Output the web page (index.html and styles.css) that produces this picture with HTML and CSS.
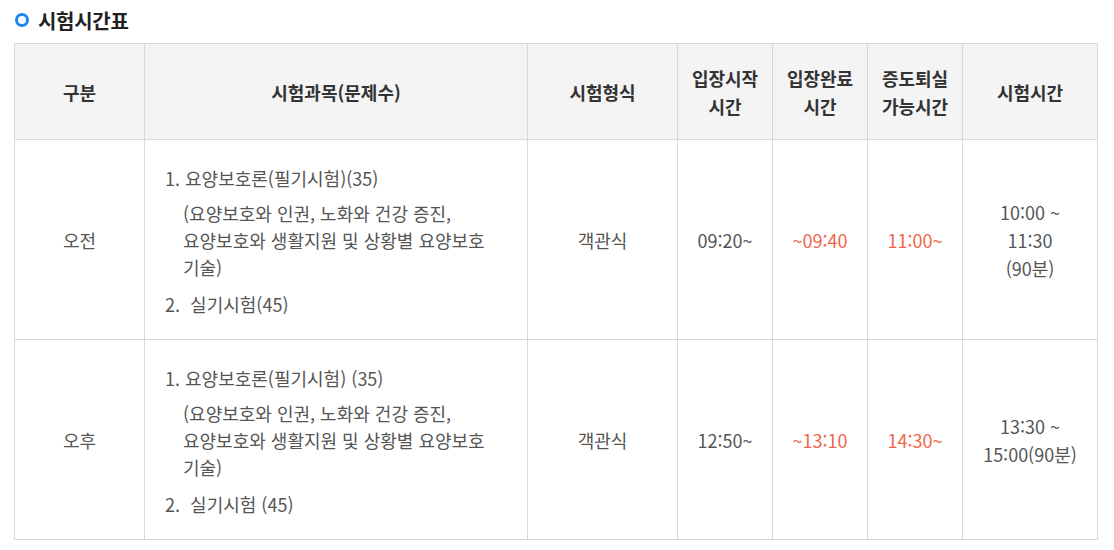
FILE: index.html
```html
<!DOCTYPE html>
<html lang="ko">
<head>
<meta charset="utf-8">
<link rel="stylesheet" href="styles.css">
</head>
<body>
<div class="page">
  <h2 class="title"><span class="ring"></span>시험시간표</h2>
  <table class="schedule">
    <colgroup>
      <col class="c1"><col class="c2"><col class="c3"><col class="c4"><col class="c5"><col class="c6"><col class="c7">
    </colgroup>
    <thead>
      <tr>
        <th>구분</th>
        <th>시험과목(문제수)</th>
        <th>시험형식</th>
        <th>입장시작<br>시간</th>
        <th>입장완료<br>시간</th>
        <th>증도퇴실<br>가능시간</th>
        <th>시험시간</th>
      </tr>
    </thead>
    <tbody>
      <tr>
        <td>오전</td>
        <td class="subjects">
          <p class="item">1. 요양보호론(필기시험)(35)</p>
          <p class="detail">(요양보호와 인권, 노화와 건강 증진, 요양보호와 생활지원 및 상황별 요양보호 기술)</p>
          <p class="item second">2.&nbsp; 실기시험(45)</p>
        </td>
        <td>객관식</td>
        <td>09:20~</td>
        <td class="accent">~09:40</td>
        <td class="accent">11:00~</td>
        <td>10:00 ~<br>11:30<br>(90분)</td>
      </tr>
      <tr>
        <td>오후</td>
        <td class="subjects">
          <p class="item">1. 요양보호론(필기시험) (35)</p>
          <p class="detail">(요양보호와 인권, 노화와 건강 증진, 요양보호와 생활지원 및 상황별 요양보호 기술)</p>
          <p class="item second">2.&nbsp; 실기시험 (45)</p>
        </td>
        <td>객관식</td>
        <td>12:50~</td>
        <td class="accent">~13:10</td>
        <td class="accent">14:30~</td>
        <td>13:30 ~<br>15:00(90분)</td>
      </tr>
    </tbody>
  </table>
</div>
</body>
</html>
```

FILE: styles.css
```css
html, body {
  margin: 0;
  padding: 0;
  background: #fff;
}

body {
  font-family: "Noto Sans CJK KR", "Noto Sans", sans-serif;
  color: #555;
}

.page {
  padding: 8px 17px 0 14px;
}

.title {
  display: flex;
  align-items: center;
  gap: 9px;
  margin: 0 0 11px 0;
  height: 24px;
  font-size: 20px;
  font-weight: 700;
  color: #222;
  letter-spacing: -0.3px;
}

.ring {
  display: block;
  width: 8px;
  height: 8px;
  border: 3.5px solid #1a86ee;
  border-radius: 50%;
  margin-left: 1px;
}

.schedule {
  width: 1083px;
  border-collapse: collapse;
  table-layout: fixed;
  font-size: 18px;
  word-break: keep-all;
}

.c1 { width: 130px; }
.c2 { width: 383px; }
.c3 { width: 150px; }
.c4 { width: 95px; }
.c5 { width: 95px; }
.c6 { width: 95px; }
.c7 { width: 135px; }

.schedule th,
.schedule td {
  border: 1px solid #d8d8d8;
  text-align: center;
  vertical-align: middle;
}

.schedule th {
  background: #f4f4f4;
  color: #333;
  font-weight: 700;
  font-size: 18px;
  line-height: 28px;
  height: 95px;
  padding: 0;
}

.schedule td {
  height: 195px;
  padding: 0;
  line-height: 28px;
  color: #555;
}

.schedule td.subjects {
  text-align: left;
  padding: 4px 18px 0 20px;
  line-height: 27px;
}

.subjects p {
  margin: 0;
}

.subjects .detail {
  margin-top: 8px;
  padding-left: 18px;
}

.subjects .second {
  margin-top: 10px;
}

.schedule td.accent {
  color: #f0654a;
}
```
